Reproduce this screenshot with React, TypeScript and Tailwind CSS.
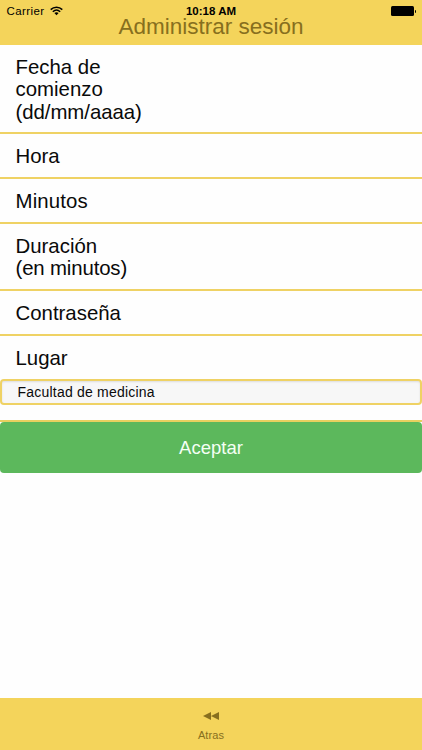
import React from "react";

type Line = { text: string; className?: string };
type RowProps = { lines: Line[]; className: string };

function Row({ lines, className }: RowProps) {
  return (
    <div className={`border-b-2 border-[#efd264] pl-[15.5px] pt-[11px] text-[20.4px] leading-[22.4px] ${className}`}>
      {lines.map((line) => (
        <div key={line.text} className={line.className}>{line.text}</div>
      ))}
    </div>
  );
}

export default function App() {
  return (
    <div className="flex h-[750px] w-[422px] flex-col overflow-hidden bg-[#fefefe] font-['Liberation_Sans',Arial,sans-serif] text-[#0a0a0a]">
      <header className="h-[45px] shrink-0 bg-[#f4d45b]">
        <div className="grid h-4 grid-cols-3 items-center pt-[4px] text-[11.5px] leading-[14px] text-black">
          <div className="flex items-center gap-[6px] pl-[6.5px]">
            <span className="tracking-[0.4px]">Carrier</span>
            <svg width="13" height="10" viewBox="0 0 13 10" fill="none" stroke="black" strokeWidth="1.5">
              <path d="M0.7 3.6C4 .3 9 .3 12.3 3.6" />
              <path d="M2.8 5.7C5 3.6 8 3.6 10.2 5.7" />
              <path d="M4.4 7.1C5.6 6 7.4 6 8.6 7.1L6.5 9.3Z" fill="black" stroke="none" />
            </svg>
          </div>
          <span className="text-center font-bold">10:18 AM</span>
          <div className="flex items-center justify-end pr-[6px]">
            <span className="h-[10px] w-[23px] rounded-[1.5px] bg-black" />
            <span className="ml-px h-[3px] w-[1.5px] rounded-r bg-black" />
          </div>
        </div>
        <h1 className="text-center text-[22.5px] leading-[22px] text-[#876f1e]">Administrar sesión</h1>
      </header>
      <main className="flex-1">
        <Row
          className="h-[89px]"
          lines={[{ text: "Fecha de" }, { text: "comienzo" }, { text: "(dd/mm/aaaa)", className: "tracking-[-0.05px]" }]}
        />
        <Row className="h-[45px]" lines={[{ text: "Hora" }]} />
        <Row className="h-[45px]" lines={[{ text: "Minutos", className: "tracking-[0.15px]" }]} />
        <Row
          className="h-[67px]"
          lines={[{ text: "Duración" }, { text: "(en minutos)", className: "tracking-[-0.15px]" }]}
        />
        <Row className="h-[45px]" lines={[{ text: "Contraseña" }]} />
        <div className="h-[86px] border-b-2 border-[#e8d060]">
          <div className="h-[43px] pl-[15.5px] pt-[11px] text-[20.4px] leading-[22.4px]">Lugar</div>
          <div className="flex h-[26px] items-center rounded-[4px] border-2 border-[#efd264] bg-[#f7f7f7] pl-[15.5px] text-[14px] tracking-[0.21px] shadow-[inset_0_1px_2px_#ddd]">
            Facultad de medicina
          </div>
        </div>
        <button className="flex h-[51px] w-full items-center justify-center rounded-[4px] bg-[#5cb85c] text-[18.5px] text-[#f4fff4]">
          Aceptar
        </button>
      </main>
      <footer className="flex h-[52px] shrink-0 flex-col items-center bg-[#f4d45b] pt-[14px] text-[#876f1e]">
        <svg width="16" height="8" viewBox="0 0 16 8" fill="currentColor">
          <path d="M0 4L8 0V8ZM8 4L16 0V8Z" />
        </svg>
        <span className="mt-[7px] text-[11px] leading-4 tracking-[0.1px]">Atras</span>
      </footer>
    </div>
  );
}
